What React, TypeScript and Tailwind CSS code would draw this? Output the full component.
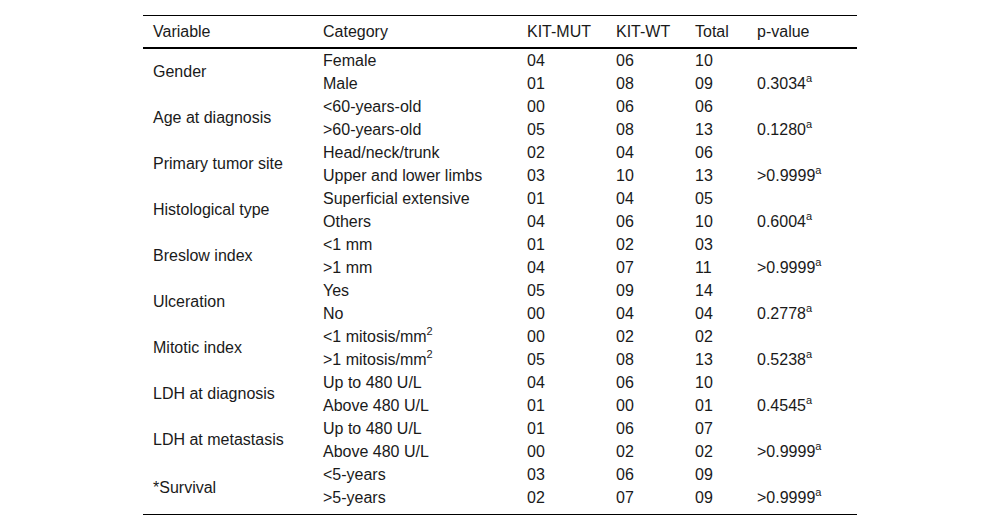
type Group = {
  variable: string;
  rows: { category: React.ReactNode; mut: string; wt: string; total: string; p?: string }[];
};

const groups: Group[] = [
  {
    variable: "Gender",
    rows: [
      { category: "Female", mut: "04", wt: "06", total: "10" },
      { category: "Male", mut: "01", wt: "08", total: "09", p: "0.3034" },
    ],
  },
  {
    variable: "Age at diagnosis",
    rows: [
      { category: "<60-years-old", mut: "00", wt: "06", total: "06" },
      { category: ">60-years-old", mut: "05", wt: "08", total: "13", p: "0.1280" },
    ],
  },
  {
    variable: "Primary tumor site",
    rows: [
      { category: "Head/neck/trunk", mut: "02", wt: "04", total: "06" },
      { category: "Upper and lower limbs", mut: "03", wt: "10", total: "13", p: ">0.9999" },
    ],
  },
  {
    variable: "Histological type",
    rows: [
      { category: "Superficial extensive", mut: "01", wt: "04", total: "05" },
      { category: "Others", mut: "04", wt: "06", total: "10", p: "0.6004" },
    ],
  },
  {
    variable: "Breslow index",
    rows: [
      { category: "<1 mm", mut: "01", wt: "02", total: "03" },
      { category: ">1 mm", mut: "04", wt: "07", total: "11", p: ">0.9999" },
    ],
  },
  {
    variable: "Ulceration",
    rows: [
      { category: "Yes", mut: "05", wt: "09", total: "14" },
      { category: "No", mut: "00", wt: "04", total: "04", p: "0.2778" },
    ],
  },
  {
    variable: "Mitotic index",
    rows: [
      {
        category: (
          <>
            {"<1 mitosis/mm"}
            <sup className="text-[11px] -top-[7px]">2</sup>
          </>
        ),
        mut: "00",
        wt: "02",
        total: "02",
      },
      {
        category: (
          <>
            {">1 mitosis/mm"}
            <sup className="text-[11px] -top-[7px]">2</sup>
          </>
        ),
        mut: "05",
        wt: "08",
        total: "13",
        p: "0.5238",
      },
    ],
  },
  {
    variable: "LDH at diagnosis",
    rows: [
      { category: "Up to 480 U/L", mut: "04", wt: "06", total: "10" },
      { category: "Above 480 U/L", mut: "01", wt: "00", total: "01", p: "0.4545" },
    ],
  },
  {
    variable: "LDH at metastasis",
    rows: [
      { category: "Up to 480 U/L", mut: "01", wt: "06", total: "07" },
      { category: "Above 480 U/L", mut: "00", wt: "02", total: "02", p: ">0.9999" },
    ],
  },
  {
    variable: "*Survival",
    rows: [
      { category: "<5-years", mut: "03", wt: "06", total: "09" },
      { category: ">5-years", mut: "02", wt: "07", total: "09", p: ">0.9999" },
    ],
  },
];

export default function App() {
  return (
    <div className="w-[1000px] h-[530px] bg-white pt-[15px] font-['Liberation_Sans',Arial,sans-serif] text-[16px] text-[#1a1a1a]">
      <table className="ml-[143px] w-[714px] border-collapse border-t border-black table-fixed">
        <colgroup>
          <col className="w-[170px]" />
          <col className="w-[204px]" />
          <col className="w-[89px]" />
          <col className="w-[79px]" />
          <col className="w-[62px]" />
          <col className="w-[110px]" />
        </colgroup>
        <thead>
          <tr className="h-[32px] border-b-2 border-black text-left">
            <th className="pl-[10px] pt-[2px] font-normal">Variable</th>
            <th className="pl-[10px] pt-[2px] font-normal">Category</th>
            <th className="pl-[10px] pt-[2px] font-normal">KIT-MUT</th>
            <th className="pl-[10px] pt-[2px] font-normal">KIT-WT</th>
            <th className="pl-[10px] pt-[2px] font-normal">Total</th>
            <th className="pl-[10px] pt-[2px] font-normal">p-value</th>
          </tr>
        </thead>
        <tbody>
          {groups.map((g, gi) =>
            g.rows.map((r, ri) => {
              const last = gi === groups.length - 1 && ri === 1;
              const cell = last ? "pl-[10px] pb-[5px] align-top leading-[23px]" : "pl-[10px] leading-[23px]";
              return (
                <tr key={`${gi}-${ri}`} className={last ? "h-[28px] border-b border-black" : "h-[23px]"}>
                  {ri === 0 && (
                    <td rowSpan={2} className="pl-[10px] align-middle">
                      {g.variable}
                    </td>
                  )}
                  <td className={`${cell} whitespace-nowrap`}>{r.category}</td>
                  <td className={cell}>{r.mut}</td>
                  <td className={cell}>{r.wt}</td>
                  <td className={cell}>{r.total}</td>
                  <td className={cell}>
                    {r.p ? (
                      <>
                        {r.p}
                        <sup className="text-[11px] -top-[7px]">a</sup>
                      </>
                    ) : null}
                  </td>
                </tr>
              );
            })
          )}
        </tbody>
      </table>
    </div>
  );
}
